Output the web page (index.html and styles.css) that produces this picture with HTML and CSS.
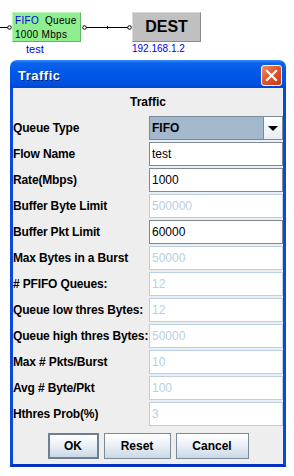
FILE: index.html
```html
<!DOCTYPE html>
<html lang="en">
<head>
  <meta charset="UTF-8">
  <meta name="viewport" content="width=device-width, initial-scale=1.0">
  <title>Traffic</title>
  <link rel="stylesheet" href="styles.css">
</head>
<body>
  <div class="canvas">
    <svg class="wires" width="294" height="56" viewBox="0 0 294 56">
      <g stroke="#000" stroke-width="1" fill="#fff">
        <line x1="0" y1="27.5" x2="8" y2="27.5"/>
        <line x1="86" y1="27.5" x2="128" y2="27.5"/>
        <line x1="107.5" y1="26" x2="107.5" y2="29"/>
        <circle cx="9.5" cy="27.5" r="1.8"/>
        <circle cx="84.5" cy="27.5" r="1.8"/>
        <circle cx="129.5" cy="27.5" r="1.8"/>
      </g>
    </svg>
    <div class="node queue">
      <div class="queue-line"><span class="queue-type">FIFO</span><span>Queue</span></div>
      <div class="queue-line">1000 Mbps</div>
    </div>
    <div class="node-label queue-label">test</div>
    <div class="node dest">DEST</div>
    <div class="node-label dest-label">192.168.1.2</div>
  </div>

  <div class="dialog">
    <div class="titlebar">
      <span class="title">Traffic</span>
      <button class="close" aria-label="Close">
        <svg width="13" height="13" viewBox="0 0 13 13">
          <path d="M2 2 L11 11 M11 2 L2 11" stroke="#fff" stroke-width="2.2" stroke-linecap="square"/>
        </svg>
      </button>
    </div>
    <div class="dialog-body">
      <div class="dialog-header">Traffic</div>
      <form class="traffic-form">
        <label>Queue Type</label>
        <div class="combo">
          <span class="combo-value">FIFO</span>
          <span class="combo-arrow"><i></i></span>
        </div>

        <label>Flow Name</label>
        <input type="text" value="test">

        <label>Rate(Mbps)</label>
        <input type="text" value="1000">

        <label>Buffer Byte Limit</label>
        <input type="text" value="500000" disabled>

        <label>Buffer Pkt Limit</label>
        <input type="text" value="60000">

        <label>Max Bytes in a Burst</label>
        <input type="text" value="50000" disabled>

        <label># PFIFO Queues:</label>
        <input type="text" value="12" disabled>

        <label>Queue low thres Bytes:</label>
        <input type="text" value="12" disabled>

        <label>Queue high thres Bytes:</label>
        <input type="text" value="50000" disabled>

        <label>Max # Pkts/Burst</label>
        <input type="text" value="10" disabled>

        <label>Avg # Byte/Pkt</label>
        <input type="text" value="100" disabled>

        <label>Hthres Prob(%)</label>
        <input type="text" value="3" disabled>
      </form>
      <div class="buttons">
        <button class="btn btn-default">OK</button>
        <button class="btn btn-reset">Reset</button>
        <button class="btn btn-cancel">Cancel</button>
      </div>
    </div>
  </div>
</body>
</html>
```

FILE: styles.css
```css
:root {
  --main-font: "Liberation Sans", Arial, sans-serif;
  --xp-blue: #0a48e0;
  --panel-bg: #eeeeee;
  --field-border: #7a8a99;
  --disabled-color: #b8cfe5;
  --link-blue: #0000e6;
}

html {
  box-sizing: border-box;
  font-family: var(--main-font);
  font-size: 12px;
}

*,
*::before,
*::after {
  box-sizing: inherit;
}

body {
  margin: 0;
  background-color: #fff;
  width: 294px;
  height: 476px;
  overflow: hidden;
}

/* diagram strip */
.canvas {
  position: relative;
  height: 60px;
}

.wires {
  position: absolute;
  left: 0;
  top: 0;
}

.node {
  position: absolute;
  top: 12px;
  height: 30px;
}

.queue {
  left: 12px;
  width: 69px;
  background-color: #90ee90;
  border-top: 1px solid #b8f5b8;
  border-left: 1px solid #b8f5b8;
  border-right: 1px solid #5fb85f;
  border-bottom: 1px solid #5fb85f;
  padding: 1px 0 0 2px;
  font-size: 10px;
  letter-spacing: 0.3px;
  white-space: nowrap;
}

.queue-line {
  height: 14px;
  line-height: 14px;
}

.queue-type {
  color: var(--link-blue);
  margin-right: 6px;
}

.dest {
  left: 132px;
  width: 69px;
  background-color: #c0c0c0;
  border-top: 1px solid #d8d8d8;
  border-left: 1px solid #d8d8d8;
  border-right: 1px solid #8a8a8a;
  border-bottom: 1px solid #8a8a8a;
  font-size: 16px;
  font-weight: bold;
  text-align: center;
  line-height: 28px;
}

.node-label {
  position: absolute;
  top: 43px;
  font-size: 10px;
  color: var(--link-blue);
  line-height: 12px;
}

.queue-label {
  left: 26px;
  font-size: 11px;
}

.dest-label {
  left: 132px;
}

/* dialog window */
.dialog {
  margin-left: 10px;
  width: 276px;
}

.titlebar {
  height: 28px;
  border-radius: 7px 7px 0 0;
  background: linear-gradient(#3d8ffb 0, #0a62ec 3px, #0058e8 45%, #0052e2 85%, #0044d4 100%);
  display: flex;
  align-items: center;
  justify-content: space-between;
  padding: 2px 4px 0 8px;
}

.title {
  color: #fff;
  font-size: 13px;
  font-weight: bold;
  letter-spacing: 0.5px;
  text-shadow: 1px 1px 0 #0a1f70;
}

.close {
  width: 21px;
  height: 21px;
  padding: 0;
  border: 1px solid #fff;
  border-radius: 3px;
  background: linear-gradient(135deg, #ec8f6c 0%, #e2562f 45%, #c73a16 100%);
  display: flex;
  align-items: center;
  justify-content: center;
}

.dialog-body {
  background-color: var(--panel-bg);
  border-left: 3px solid var(--xp-blue);
  border-right: 3px solid var(--xp-blue);
  border-bottom: 3px solid #0433c4;
  height: 379px;
}

.dialog-header {
  height: 28px;
  line-height: 28px;
  text-align: center;
  font-weight: bold;
}

.traffic-form {
  display: grid;
  grid-template-columns: 136px 134px;
  grid-auto-rows: 24px;
  row-gap: 2px;
  margin: 0;
}

.traffic-form label {
  display: flex;
  align-items: center;
  font-weight: bold;
  white-space: nowrap;
  letter-spacing: -0.15px;
}

.traffic-form input {
  font-family: var(--main-font);
  font-size: 12px;
  color: #000;
  background-color: #fff;
  border: 1px solid var(--field-border);
  padding: 0 2px;
  margin: 0;
  height: 24px;
  width: 134px;
  outline: none;
}

.traffic-form input:disabled {
  color: var(--disabled-color);
  border-color: var(--disabled-color);
  -webkit-text-fill-color: var(--disabled-color);
}

.combo {
  display: flex;
  border: 1px solid var(--field-border);
  background-color: #a3b8cc;
}

.combo-value {
  flex: 1;
  display: flex;
  align-items: center;
  padding-left: 2px;
  font-weight: bold;
}

.combo-arrow {
  width: 19px;
  border-left: 1px solid var(--field-border);
  background: linear-gradient(#ffffff, #e8eef4);
  display: flex;
  align-items: center;
  justify-content: center;
}

.combo-arrow i {
  width: 0;
  height: 0;
  border-left: 5px solid transparent;
  border-right: 5px solid transparent;
  border-top: 5px solid #000;
}

.buttons {
  display: flex;
  justify-content: center;
  gap: 5px;
  margin-top: 7px;
}

.btn {
  height: 26px;
  font-family: var(--main-font);
  font-size: 12px;
  font-weight: bold;
  color: #000;
  border: 1px solid var(--field-border);
  background: linear-gradient(#ffffff 0%, #eef3f8 40%, #c9d8e6 100%);
  padding: 0;
}

.btn-default {
  width: 51px;
  border: 2px solid #6e7f90;
}

.btn-reset {
  width: 67px;
}

.btn-cancel {
  width: 73px;
}
```
